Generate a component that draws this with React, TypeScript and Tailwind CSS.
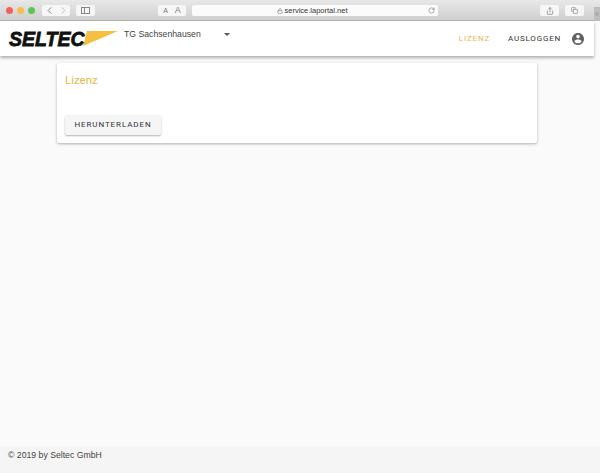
import { ChevronLeft, ChevronRight, RotateCw, Share, Copy, Lock, Plus } from 'lucide-react';

function Toolbar() {
  return (
    <div className="h-[21px] flex items-start pt-[5px] bg-gradient-to-b from-[#e8e8e8] to-[#cfcfcf] border-b border-[#b4b4b4] relative">
      <div className="flex items-center gap-[4px] pl-[6px] pt-[2px]">
        <span className="w-[7px] h-[7px] rounded-full bg-[#f2625a]" />
        <span className="w-[7px] h-[7px] rounded-full bg-[#f5be4f]" />
        <span className="w-[7px] h-[7px] rounded-full bg-[#5fc454]" />
      </div>
      <div className="flex ml-[7px] h-[11px] w-[28px] rounded-[2px] bg-[#f6f6f6]">
        <span className="flex-1 flex items-center justify-center"><ChevronLeft size={11} color="#777" /></span>
        <span className="flex-1 flex items-center justify-center"><ChevronRight size={11} color="#bbb" /></span>
      </div>
      <div className="ml-[6px] w-[19px] h-[11px] rounded-[2px] bg-[#f6f6f6] flex items-center justify-center">
        <span className="w-[9px] h-[7px] border border-[#888] flex">
          <span className="w-[3px] border-r border-[#888]" />
        </span>
      </div>
      <div className="ml-[63px] w-[28px] h-[11px] rounded-[2px] bg-[#f6f6f6] flex items-center justify-around px-[2px] text-[#777] font-['Liberation_Sans',sans-serif] leading-none">
        <span className="text-[7px]">A</span>
        <span className="text-[9px]">A</span>
      </div>
      <div className="ml-[6px] w-[246px] h-[11px] rounded-[2px] bg-[#fbfbfb] flex items-center relative">
        <div className="flex-1 flex items-center justify-center gap-[2px] pl-[4px] text-[7.5px] leading-none text-[#333] font-['Liberation_Sans',sans-serif]">
          <Lock size={6} color="#777" />
          <span>service.laportal.net</span>
        </div>
        <RotateCw size={7} color="#777" className="mr-[3px]" />
      </div>
      <div className="ml-[102px] w-[19px] h-[11px] rounded-[2px] bg-[#f6f6f6] flex items-center justify-center">
        <Share size={8} color="#777" />
      </div>
      <div className="ml-[6px] w-[19px] h-[11px] rounded-[2px] bg-[#f6f6f6] flex items-center justify-center">
        <Copy size={7} color="#777" />
      </div>
      <div className="absolute right-0 top-[7px] w-[6px] h-[14px] bg-[#bdbdbd] flex items-center justify-center overflow-hidden">
        <Plus size={6} color="#888" className="shrink-0" />
      </div>
    </div>
  );
}

function Logo() {
  return (
    <div className="flex items-center relative w-[108px] h-[18px]">
      <svg className="absolute left-[74px] top-[1px]" width="36" height="16" viewBox="0 0 36 16">
        <polygon points="4,0 35,0 0,15" fill="#f5bf42" />
      </svg>
      <span className="relative text-[21px] leading-none font-black italic text-[#111] font-['Liberation_Sans',sans-serif] [-webkit-text-stroke:0.8px_#111] [transform:scaleX(0.93)] origin-left">
        SELTEC
      </span>
    </div>
  );
}

function Header() {
  return (
    <header className="h-[35px] bg-white flex items-center shadow-[0_2px_3px_rgba(0,0,0,0.3)] relative">
      <div className="pl-[9px]">
        <Logo />
      </div>
      <span className="ml-[7px] text-[8.7px] text-[#444] font-['Liberation_Sans',sans-serif] -mt-[7px]">TG Sachsenhausen</span>
      <span className="ml-[23px] -mt-[9px] w-0 h-0 border-x-[3px] border-x-transparent border-t-[3px] border-t-[#555]" />
      <nav className="ml-auto flex items-center font-['Roboto',sans-serif] text-[8px] tracking-[0.8px]">
        <span className="text-[#e9b949]">LIZENZ</span>
        <span className="ml-[18px] text-[#333]">AUSLOGGEN</span>
        <svg className="ml-[11px] mr-[10px]" width="12" height="12" viewBox="2 2 20 20" fill="#616161">
          <path d="M12 2C6.48 2 2 6.48 2 12s4.48 10 10 10 10-4.48 10-10S17.52 2 12 2zm0 3c1.66 0 3 1.34 3 3s-1.34 3-3 3-3-1.34-3-3 1.34-3 3-3zm0 14.2c-2.5 0-4.71-1.28-6-3.22.03-1.99 4-3.08 6-3.08 1.99 0 5.97 1.09 6 3.08-1.29 1.94-3.5 3.22-6 3.22z" />
        </svg>
      </nav>
    </header>
  );
}

export default function App() {
  return (
    <div className="w-[600px] h-[473px] flex flex-col bg-[#fafafa] overflow-hidden relative">
      <Toolbar />
      <div className="flex-1 flex flex-col w-[594px]">
        <Header />
        <main className="flex-1 pt-[7px] pl-[57px]">
          <div className="w-[480px] h-[80px] bg-white rounded-[2px] shadow-[0_1px_3px_rgba(0,0,0,0.3)] pl-[8px] pt-[10px]">
            <h2 className="text-[11.5px] leading-[14px] text-[#e9b949] font-['Roboto',sans-serif]">Lizenz</h2>
            <button className="mt-[28px] h-[20px] w-[96px] bg-[#f5f5f5] rounded-[2px] shadow-[0_1px_2px_rgba(0,0,0,0.3)] text-[8px] tracking-[0.9px] text-[#333] font-['Roboto',sans-serif] font-normal">
              HERUNTERLADEN
            </button>
          </div>
        </main>
      </div>
      <footer className="h-[27px] bg-[#f5f5f5] pl-[8px] pt-[4px] text-[8.7px] leading-[11px] text-[#444] font-['Liberation_Sans',sans-serif]">
        © 2019 by Seltec GmbH
      </footer>
    </div>
  );
}
